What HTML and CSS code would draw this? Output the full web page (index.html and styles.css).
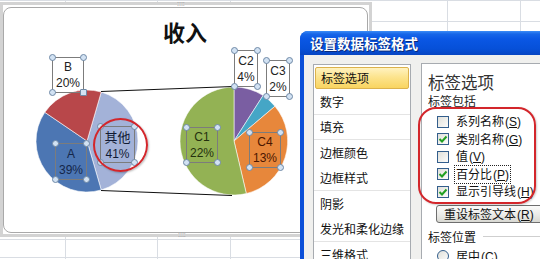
FILE: index.html
```html
<!DOCTYPE html>
<html lang="zh">
<head>
<meta charset="utf-8">
<link rel="stylesheet" href="styles.css">
</head>
<body>
<svg class="grid" width="540" height="259" viewBox="0 0 540 259">
  <g stroke="#d9dde3" stroke-width="1">
    <line x1="0" y1="0.5" x2="540" y2="0.5"/>
    <line x1="0" y1="21.5" x2="540" y2="21.5"/>
    <line x1="0" y1="239.5" x2="540" y2="239.5"/>
    <line x1="0" y1="257.5" x2="540" y2="257.5"/>
    <line x1="65.5" y1="0" x2="65.5" y2="259"/>
    <line x1="157.5" y1="0" x2="157.5" y2="259"/>
    <line x1="230.5" y1="0" x2="230.5" y2="259"/>
    <line x1="447.5" y1="0" x2="447.5" y2="259"/>
    <line x1="520.5" y1="0" x2="520.5" y2="259"/>
  </g>
</svg>

<div class="chart">
  <div class="frame"></div>
  <div class="chart-area"></div>
  <span class="grip grip-top">::::</span>
  <span class="grip grip-bottom">::::</span>
  <h1 class="title">收入</h1>
  <svg class="plot" width="372" height="237" viewBox="0 0 372 237">
    <g stroke="#ffffff" stroke-opacity="0.7" stroke-width="0.8">
      <path fill="#a3b2d8" d="M87,141 L101.23,92.03 A51,51 0 0 1 101.23,189.97 Z"/>
      <path fill="#4c76b3" d="M87,141 L101.23,189.97 A51,51 0 0 1 44.82,112.33 Z"/>
      <path fill="#b8474a" d="M87,141 L44.82,112.33 A51,51 0 0 1 101.23,92.03 Z"/>
      <path fill="#7a5ea2" d="M234,141 L234,87 A54,54 0 0 1 263.06,95.5 Z"/>
      <path fill="#45a6c6" d="M234,141 L263.06,95.5 A54,54 0 0 1 274.94,106.25 Z"/>
      <path fill="#e7873b" d="M234,141 L274.94,106.25 A54,54 0 0 1 246.30,193.58 Z"/>
      <path fill="#93b254" d="M234,141 L246.30,193.58 A54,54 0 1 1 234,87 Z"/>
    </g>
    <g stroke="#111" stroke-width="1.2" fill="none">
      <line x1="101" y1="91.5" x2="233" y2="86.5"/>
      <line x1="101" y1="190.5" x2="232" y2="195.5"/>
    </g>
  </svg>

  <div class="dl dl-b"><span>B</span><span>20%</span><i class="h tl"></i><i class="h tr"></i><i class="h bl"></i><i class="h br sq"></i></div>
  <div class="dl dl-a"><span>A</span><span>39%</span><i class="h tl"></i><i class="h tr"></i><i class="h bl"></i><i class="h br"></i></div>
  <div class="dl dl-o"><span class="cjk">其他</span><span>41%</span><i class="h tl"></i><i class="h tr"></i><i class="h bl"></i><i class="h br"></i></div>
  <div class="dl dl-c2"><span>C2</span><span>4%</span><i class="h tl"></i><i class="h tr"></i><i class="h bl"></i><i class="h br"></i></div>
  <div class="dl dl-c3"><span>C3</span><span>2%</span><i class="h tl"></i><i class="h tr"></i><i class="h bl"></i><i class="h br"></i></div>
  <div class="dl dl-c1"><span>C1</span><span>22%</span><i class="h tl"></i><i class="h tr"></i><i class="h bl"></i><i class="h br"></i></div>
  <div class="dl dl-c4"><span>C4</span><span>13%</span><i class="h tl"></i><i class="h tr"></i><i class="h bl"></i><i class="h br"></i></div>

  <div class="ring"></div>
</div>

<div class="dialog">
  <div class="titlebar">设置数据标签格式</div>
  <div class="dbody">
    <div class="nav">
      <div class="grp"><div class="item sel">标签选项</div><div class="item">数字</div></div>
      <div class="grp"><div class="item">填充</div></div>
      <div class="grp"><div class="item">边框颜色</div><div class="item">边框样式</div></div>
      <div class="grp"><div class="item">阴影</div><div class="item">发光和柔化边缘</div></div>
      <div class="grp"><div class="item">三维格式</div></div>
    </div>
    <div class="panel">
      <div class="ph">标签选项</div>
      <div class="sub">标签包括</div>
      <div class="checks">
        <div class="row"><span class="cb"></span><span class="lt">系列名称<span class="acc">(<u>S</u>)</span></span></div>
        <div class="row"><span class="cb on"><svg viewBox="0 0 12 12" width="12" height="12"><path d="M2.5 6 L5 8.5 L9.5 3.5" fill="none" stroke="#22a022" stroke-width="2"/></svg></span><span class="lt">类别名称<span class="acc">(<u>G</u>)</span></span></div>
        <div class="row"><span class="cb"></span><span class="lt">值<span class="acc">(<u>V</u>)</span></span></div>
        <div class="row"><span class="cb on"><svg viewBox="0 0 12 12" width="12" height="12"><path d="M2.5 6 L5 8.5 L9.5 3.5" fill="none" stroke="#22a022" stroke-width="2"/></svg></span><span class="lt focus">百分比<span class="acc">(<u>P</u>)</span></span></div>
        <div class="row"><span class="cb on"><svg viewBox="0 0 12 12" width="12" height="12"><path d="M2.5 6 L5 8.5 L9.5 3.5" fill="none" stroke="#22a022" stroke-width="2"/></svg></span><span class="lt">显示引导线<span class="acc">(<u>H</u>)</span></span></div>
      </div>
      <div class="btn">重设标签文本<span class="acc">(<u>R</u>)</span></div>
      <div class="sec"><span>标签位置</span></div>
      <div class="row radio"><span class="rb"></span><span class="lt">居中<span class="acc">(<u>C</u>)</span></span></div>
    </div>
  </div>
</div>

<div class="annot"></div>
</body>
</html>
```

FILE: styles.css
```css
* { box-sizing: border-box; margin: 0; padding: 0; }
html, body { width: 540px; height: 259px; overflow: hidden; background: #fff; }
body {
  position: relative;
  font-family: "Liberation Sans", "Noto Sans CJK SC", sans-serif;
  color: #111;
}
.grid { position: absolute; left: 0; top: 0; }

/* ---------- chart object ---------- */
.chart { position: absolute; left: 0; top: 0; width: 372px; height: 237px; }
.frame {
  position: absolute; left: 0; top: 2px; right: 0; bottom: 0;
  border: 3px solid #d3d3d3;
  background: #fff;
}
.chart-area {
  position: absolute; left: 3px; top: 7px; right: 4px; bottom: 4px;
  border: 1px solid #a9a9a9; border-radius: 8px; background: #fff;
}
.grip {
  position: absolute; font-size: 7px; line-height: 7px; color: #8a8a8a;
}
.grip-top { left: 177px; top: 0; }
.grip-bottom { left: 178px; top: 231px; }
.title {
  position: absolute; left: 0; top: 17px; width: 370px;
  text-align: center;
  font-family: "Noto Sans CJK SC", sans-serif;
  font-size: 22px; font-weight: 700; line-height: 28px; color: #111;
}
.plot { position: absolute; left: 0; top: 0; }

.dl {
  position: absolute;
  display: flex; flex-direction: column; align-items: center; justify-content: center;
  border: 1px solid #7c7c7c;
  font-size: 12px; line-height: 16px;
}
.dl .cjk { font-family: "Noto Sans CJK SC", sans-serif; font-size: 13px; line-height: 18px; }
.dl-b  { left: 52px;  top: 57px;  width: 32px; height: 36px; color: #222; }
.dl-a  { left: 55px;  top: 143px; width: 32px; height: 37px; color: #14264a; }
.dl-o  { left: 100px; top: 126px; width: 35px; height: 37px; color: #111a33; }
.dl-c2 { left: 234px; top: 50px;  width: 24px; height: 37px; color: #222; }
.dl-c3 { left: 266px; top: 60px;  width: 24px; height: 37px; color: #222; }
.dl-c1 { left: 186px; top: 127px; width: 32px; height: 36px; color: #24300e; }
.dl-c4 { left: 249px; top: 132px; width: 32px; height: 36px; color: #4a1600; }

.h {
  position: absolute; width: 7px; height: 7px;
  border: 1px solid #6f89a6; border-radius: 50%;
  background: #d2e2f3;
}
.h.sq { border-radius: 1px; }
.tl { left: -4px; top: -4px; }
.tr { right: -4px; top: -4px; }
.bl { left: -4px; bottom: -4px; }
.br { right: -4px; bottom: -4px; }

.ring {
  position: absolute; left: 93px; top: 118px; width: 55px; height: 54px;
  border: 2px solid #d3262b; border-radius: 50%;
  box-shadow: 1px 1px 2px rgba(0,0,0,.25);
}

/* ---------- dialog ---------- */
.dialog {
  position: absolute; left: 300px; top: 31px; width: 250px; height: 240px;
  background: #0b4fd8;
  border-radius: 8px 0 0 0;
  display: flex; flex-direction: column;
  font-family: "Noto Sans CJK SC", sans-serif;
  font-size: 12px;
}
.titlebar {
  height: 24px; flex: none;
  padding-left: 10px;
  border-radius: 8px 0 0 0;
  background: linear-gradient(#3b8cf6 0, #1766e8 3px, #0a57e4 8px, #0650d8 18px, #0745c2 24px);
  color: #fff; font-weight: 700; font-size: 13.5px; line-height: 25px;
  text-shadow: 1px 1px 0 #0b2a78;
}
.dbody {
  flex: 1;
  margin-left: 4px;
  background: #f0f0ee;
  display: flex; gap: 10px;
  padding: 9px 0 0 9px;
}
.nav {
  width: 98px; flex: none;
  background: #fff;
  border: 1px solid #a7abb0;
  padding-top: 1px;
}
.grp { border-bottom: 1px solid #e4e4e4; }
.item {
  height: 24px; line-height: 24px;
  padding-left: 6px;
  color: #111;
  white-space: nowrap;
}
.item.sel {
  height: 22px; line-height: 20px;
  margin: 1px;
  padding-left: 5px;
  background: linear-gradient(#fff2c0, #fce48e 45%, #f9d460);
  border: 1px solid #dcb24c; border-radius: 2px;
}
.grp:nth-child(3) .item, .grp:nth-child(4) .item, .grp:nth-child(5) .item { height: 25px; line-height: 25px; }

.panel {
  flex: 1;
  margin-top: -1px;
  background: #fff;
  border: 1px solid #a7abb0;
  padding: 9px 0 0 6px;
  white-space: nowrap;
}
.ph { font-size: 16.5px; line-height: 19px; color: #333; }
.sub { font-size: 12px; line-height: 14px; margin-top: 2px; color: #222; }
.checks { margin-top: 5px; }
.row {
  height: 17.5px;
  display: flex; align-items: center; gap: 6px;
  padding-left: 9px;
}
.cb {
  width: 12px; height: 12px; flex: none;
  border: 1px solid #335e8c;
  background: linear-gradient(135deg, #e0e0da, #fcfcfb);
  display: flex;
}
.cb svg { margin: -1px; }
.lt { line-height: 15px; color: #111; padding: 0 1px; }
.lt.focus { outline: 1px dotted #222; }
.acc { font-family: "Liberation Sans", sans-serif; font-size: 12px; margin-left: 1px; }
.btn {
  margin: 4px 0 0 8px;
  height: 18px; width: 130px;
  border: 1px solid #6e6e6e; border-radius: 3px;
  background: linear-gradient(#fbfbfa, #e9e9e6 60%, #d8d8d2);
  padding-left: 7px;
  line-height: 16px;
}
.sec {
  margin-top: 6px;
  display: flex; align-items: center; gap: 7px;
  line-height: 16px;
}
.sec::after { content: ""; flex: 1; height: 1px; background: #cfcfcf; }
.radio { margin-top: 3px; }
.rb {
  width: 12px; height: 12px; flex: none;
  border: 1px solid #335e8c; border-radius: 50%;
  background: linear-gradient(135deg, #e0e0da, #fcfcfb);
}

/* annotation */
.annot {
  position: absolute; left: 418px; top: 107px; width: 118px; height: 97px;
  border: 2px solid #d3262b; border-radius: 18px;
  box-shadow: 1px 1px 2px rgba(0,0,0,.2);
}
```
